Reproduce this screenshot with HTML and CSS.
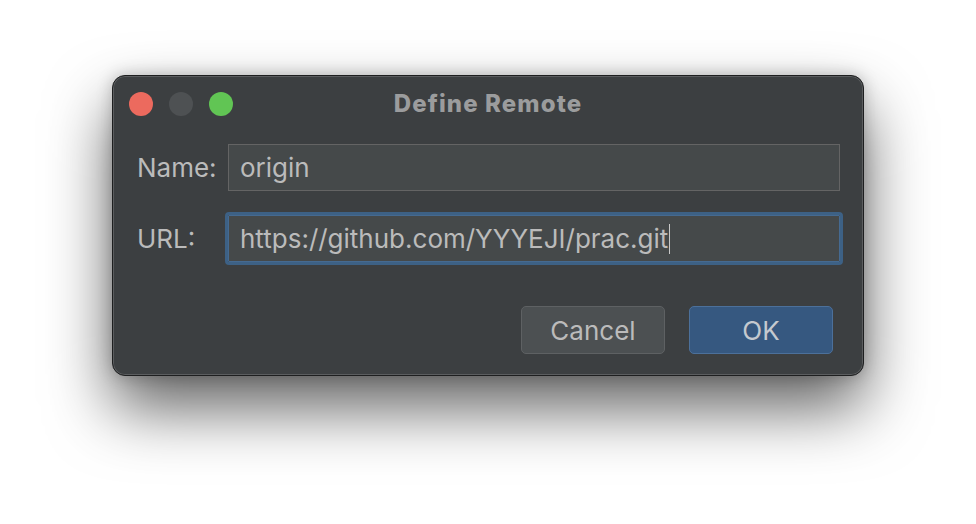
FILE: index.html
```html
<!DOCTYPE html>
<html>
<head>
<meta charset="utf-8">
<link rel="stylesheet" href="styles.css">
</head>
<body>
<div class="dialog">
  <div class="titlebar">
    <div class="lights">
      <span class="light red"></span>
      <span class="light gray"></span>
      <span class="light green"></span>
    </div>
    <div class="title">Define Remote</div>
  </div>
  <div class="form">
    <label class="label">Name:</label>
    <div class="field">origin</div>
    <label class="label">URL:</label>
    <div class="field focused">https://github.com/YYYEJI/prac.git<span class="caret"></span></div>
  </div>
  <div class="buttons">
    <button class="btn cancel">Cancel</button>
    <button class="btn ok">OK</button>
  </div>
</div>
</body>
</html>
```
FILE: styles.css
```css
html, body {
  margin: 0;
  height: 100%;
}
html {
  background: #ffffff;
}
body {
  box-sizing: border-box;
  padding: 75px 0 0 112px;
  font-family: Inter, "Noto Sans", sans-serif;
}
.dialog {
  width: 750px;
  height: 299px;
  background: #3c3f41;
  border: 1px solid #1e1f20;
  border-radius: 13px;
  box-shadow: inset 0 0 0 1px #5b5d5f, 0 32px 64px rgba(0,0,0,0.62), 0 0 16px rgba(0,0,0,0.22);
  display: flex;
  flex-direction: column;
  color: #bbbbbb;
}
.titlebar {
  position: relative;
  height: 56px;
  display: flex;
  align-items: center;
  justify-content: center;
}
.lights {
  position: absolute;
  left: 16px;
  top: 16px;
  display: flex;
  gap: 16px;
}
.light {
  width: 24px;
  height: 24px;
  border-radius: 50%;
  display: block;
}
.red { background: #ec6a5e; }
.gray { background: #4e5153; }
.green { background: #61c554; }
.title {
  font-weight: 800;
  font-size: 24px;
  letter-spacing: 1.1px;
  color: #9b9c9d;
  margin-top: -2px;
}
.form {
  display: grid;
  grid-template-columns: 91px 1fr;
  row-gap: 24px;
  padding: 12px 23px 0 24px;
  align-items: center;
}
.label {
  font-size: 26px;
  color: #bbbbbb;
}
.field {
  height: 45px;
  border: 1px solid #646464;
  background: #45494a;
  font-size: 26px;
  color: #bbbbbb;
  display: flex;
  align-items: center;
  padding-left: 11px;
}
.field.focused {
  border-color: #456a91;
  outline: 3px solid #3d6185;
  outline-offset: 0;
  border-radius: 1px;
}
.caret {
  display: inline-block;
  width: 0;
  height: 30px;
  border-left: 1.5px solid #c8c8c8;
  margin-left: 1px;
}
.buttons {
  display: flex;
  justify-content: flex-end;
  gap: 24px;
  padding: 44px 30px 0 0;
}
.btn {
  width: 144px;
  height: 48px;
  border-radius: 5px;
  font-family: Inter, "Noto Sans", sans-serif;
  font-size: 26px;
  color: #bbbbbb;
}
.cancel {
  background: #4c5052;
  border: 1px solid #5e6163;
}
.ok {
  background: #365880;
  border: 1px solid #4c709a;
  color: #c4c9cf;
}
```
